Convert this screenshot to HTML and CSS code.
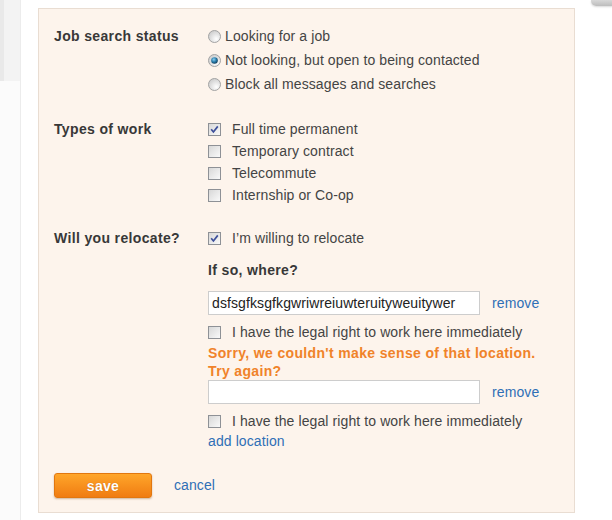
FILE: index.html
```html
<!DOCTYPE html>
<html>
<head>
<meta charset="utf-8">
<link rel="stylesheet" href="styles.css">
</head>
<body>
<svg class="defs" width="0" height="0" aria-hidden="true">
  <defs>
    <linearGradient id="boxg" x1="0" y1="0" x2="1" y2="1">
      <stop offset="0" stop-color="#d6d6d6"/>
      <stop offset="1" stop-color="#fbfbfb"/>
    </linearGradient>
    <radialGradient id="radg" cx="0.65" cy="0.7" r="0.7">
      <stop offset="0" stop-color="#ffffff"/>
      <stop offset="1" stop-color="#cfcfcf"/>
    </radialGradient>
    <radialGradient id="dotg" cx="0.4" cy="0.35" r="0.7">
      <stop offset="0" stop-color="#8fd0f0"/>
      <stop offset="0.5" stop-color="#2a7fae"/>
      <stop offset="1" stop-color="#0e3550"/>
    </radialGradient>
  </defs>
</svg>
<div class="page">
  <div class="sidebar"><div class="sidebar-top"></div></div>
  <form class="panel">
    <div class="field status">
      <div class="label label-24">Job search status</div>
      <div class="options">
        <div class="radio-row">
          <svg class="radio" viewBox="0 0 13 13"><circle cx="6.5" cy="6.5" r="6" fill="url(#radg)" stroke="#a3a3a3"/></svg>
          <span>Looking for a job</span>
        </div>
        <div class="radio-row">
          <svg class="radio" viewBox="0 0 13 13"><circle cx="6.5" cy="6.5" r="6" fill="url(#radg)" stroke="#a3a3a3"/><circle cx="6.5" cy="6.5" r="3.3" fill="url(#dotg)"/></svg>
          <span>Not looking, but open to being contacted</span>
        </div>
        <div class="radio-row">
          <svg class="radio" viewBox="0 0 13 13"><circle cx="6.5" cy="6.5" r="6" fill="url(#radg)" stroke="#a3a3a3"/></svg>
          <span>Block all messages and searches</span>
        </div>
      </div>
    </div>

    <div class="field">
      <div class="label">Types of work</div>
      <div class="options">
        <div class="check-row">
          <svg class="check" viewBox="0 0 13 13"><rect x="0.5" y="0.5" width="12" height="12" fill="url(#boxg)" stroke="#8e9196"/><path d="M3.2 6.3 L5.4 9 L9.8 3.4" fill="none" stroke="#3d4f9a" stroke-width="1.7"/></svg>
          <span>Full time permanent</span>
        </div>
        <div class="check-row">
          <svg class="check" viewBox="0 0 13 13"><rect x="0.5" y="0.5" width="12" height="12" fill="url(#boxg)" stroke="#8e9196"/></svg>
          <span>Temporary contract</span>
        </div>
        <div class="check-row">
          <svg class="check" viewBox="0 0 13 13"><rect x="0.5" y="0.5" width="12" height="12" fill="url(#boxg)" stroke="#8e9196"/></svg>
          <span>Telecommute</span>
        </div>
        <div class="check-row">
          <svg class="check" viewBox="0 0 13 13"><rect x="0.5" y="0.5" width="12" height="12" fill="url(#boxg)" stroke="#8e9196"/></svg>
          <span>Internship or Co-op</span>
        </div>
      </div>
    </div>

    <div class="field">
      <div class="label">Will you relocate?</div>
      <div class="options">
        <div class="check-row">
          <svg class="check" viewBox="0 0 13 13"><rect x="0.5" y="0.5" width="12" height="12" fill="url(#boxg)" stroke="#8e9196"/><path d="M3.2 6.3 L5.4 9 L9.8 3.4" fill="none" stroke="#3d4f9a" stroke-width="1.7"/></svg>
          <span>I’m willing to relocate</span>
        </div>
        <div class="where">If so, where?</div>
        <div class="loc-row first">
          <div class="text-input">dsfsgfksgfkgwriwreiuwteruityweuitywer</div>
          <a class="link remove">remove</a>
        </div>
        <div class="check-row legal">
          <svg class="check" viewBox="0 0 13 13"><rect x="0.5" y="0.5" width="12" height="12" fill="url(#boxg)" stroke="#8e9196"/></svg>
          <span>I have the legal right to work here immediately</span>
        </div>
        <div class="error">Sorry, we couldn't make sense of that location.<br>Try again?</div>
        <div class="loc-row">
          <div class="text-input"></div>
          <a class="link remove">remove</a>
        </div>
        <div class="check-row legal">
          <svg class="check" viewBox="0 0 13 13"><rect x="0.5" y="0.5" width="12" height="12" fill="url(#boxg)" stroke="#8e9196"/></svg>
          <span>I have the legal right to work here immediately</span>
        </div>
        <a class="link add">add location</a>
      </div>
    </div>

    <div class="actions">
      <button type="button" class="save">save</button>
      <a class="link cancel">cancel</a>
    </div>
  </form>
  <div class="corner"></div>
</div>
</body>
</html>
```

FILE: styles.css
```css
html, body {
  margin: 0;
  padding: 0;
  background: #ffffff;
}
body {
  font-family: "Liberation Sans", Arial, sans-serif;
  font-size: 14px;
  letter-spacing: 0.1px;
  color: #444444;
  height: 520px;
  overflow: hidden;
}
.defs {
  position: absolute;
  width: 0;
  height: 0;
}
.page {
  display: flex;
  align-items: flex-start;
  height: 520px;
}
.sidebar {
  width: 20px;
  height: 520px;
  border-right: 1px solid #ececec;
  background: #fbfbfb;
  flex: none;
}
.sidebar-top {
  height: 81px;
  background: #f3f3f3;
  border-left: 4px solid #e9e9e9;
  box-sizing: border-box;
}
.panel {
  flex: none;
  width: 537px;
  margin: 8px 0 0 17px;
  border: 1px solid #e9ddd2;
  background: #fdf4ec;
  padding: 15px 15px 14px 15px;
  box-sizing: border-box;
}
.corner {
  flex: none;
  width: 22px;
  height: 6px;
  margin-left: 16px;
  border-bottom-left-radius: 5px;
  background: linear-gradient(#d8d8d8, #bdbdbd);
  box-shadow: 0 1px 2px rgba(0,0,0,0.15);
}
.field {
  display: grid;
  grid-template-columns: 154px 1fr;
  margin-bottom: 21px;
}
.field.status {
  margin-bottom: 22px;
}
.field:last-of-type {
  margin-bottom: 0;
}
.label {
  font-weight: bold;
  color: #383838;
  line-height: 22px;
  letter-spacing: 0.35px;
}
.label-24 {
  line-height: 24px;
}
.options {
  display: flex;
  flex-direction: column;
  align-items: flex-start;
}
.radio-row {
  display: flex;
  align-items: center;
  height: 24px;
}
.radio {
  width: 13px;
  height: 13px;
  margin-right: 4px;
  flex: none;
}
.check-row {
  display: flex;
  align-items: center;
  height: 22px;
}
.check {
  width: 13px;
  height: 13px;
  margin-right: 11px;
  flex: none;
}
.where {
  font-weight: bold;
  color: #383838;
  line-height: 22px;
  margin-top: 10px;
  letter-spacing: 0.35px;
}
.loc-row {
  display: flex;
  align-items: center;
}
.loc-row.first {
  margin-top: 10px;
}
.text-input {
  width: 272px;
  height: 24px;
  box-sizing: border-box;
  border: 1px solid #cdcdcd;
  background: #ffffff;
  color: #222222;
  padding: 0 3px;
  line-height: 22px;
  white-space: nowrap;
  overflow: hidden;
}
.remove {
  margin-left: 12px;
}
.link {
  color: #2f6fb6;
  text-decoration: none;
}
.legal {
  margin-top: 6px;
}
.error {
  color: #f0832a;
  font-weight: bold;
  line-height: 18px;
  margin-top: 1px;
  letter-spacing: 0.35px;
}
.add {
  line-height: 18px;
}
.actions {
  display: flex;
  align-items: center;
  margin-top: 23px;
}
.save {
  width: 98px;
  height: 25px;
  border: 1px solid #e2770f;
  border-radius: 3px;
  background: linear-gradient(#ffa62a, #f07c12);
  color: #ffffff;
  font-family: "Liberation Sans", Arial, sans-serif;
  font-size: 14px;
  font-weight: bold;
  letter-spacing: 0.3px;
  text-shadow: 0 0 1px rgba(150,70,0,0.6);
  box-shadow: 0 1px 2px rgba(120,60,0,0.35);
  padding: 0;
}
.cancel {
  margin-left: 22px;
  line-height: 25px;
}
```
